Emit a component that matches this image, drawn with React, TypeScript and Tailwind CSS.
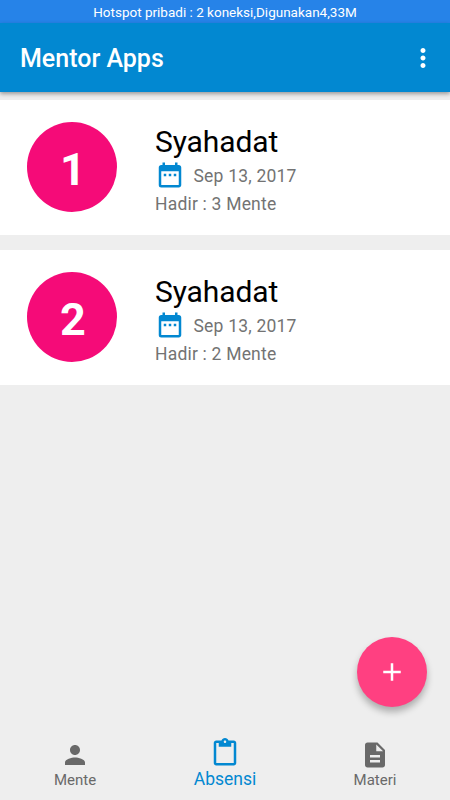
import {useState} from "react"
import type {IconType} from "react-icons"
import {MdAdd, MdContentPaste, MdDateRange, MdDescription, MdMoreVert, MdPerson} from "react-icons/md"

type TabKey = "mente" | "absensi" | "materi"

type Meeting = {
    id: number
    title: string
    date: string
    attendees: number
}

const MEETINGS: Meeting[] = [
    {id: 1, title: "Syahadat", date: "Sep 13, 2017", attendees: 3},
    {id: 2, title: "Syahadat", date: "Sep 13, 2017", attendees: 2},
]

const TABS: { key: TabKey; label: string; icon: IconType }[] = [
    {key: "mente", label: "Mente", icon: MdPerson},
    {key: "absensi", label: "Absensi", icon: MdContentPaste},
    {key: "materi", label: "Materi", icon: MdDescription},
]

function MeetingCard({meeting}: { meeting: Meeting }) {
    return (
        <li className="flex h-[135px] bg-white pt-[22px] pl-[27px]">
            <div
                className="flex size-[90px] shrink-0 items-center justify-center rounded-full bg-[#f50b78] pt-1.5 pl-0.5 text-[45px] font-bold text-white">
                {meeting.id}
            </div>
            <div className="ml-[38px] text-[17.5px] tracking-[0.2px] text-[#737373]">
                <h2 className="pt-px text-[30px] leading-[38px] tracking-[-0.1px] text-black">{meeting.title}</h2>
                <div className="flex h-7 items-center">
                    <MdDateRange className="size-[30px] text-[#0288d1]"/>
                    <span className="ml-[8.5px] pt-0.5 leading-5">{meeting.date}</span>
                </div>
                <p className="leading-[30px]">Hadir : {meeting.attendees} Mente</p>
            </div>
        </li>
    )
}

export default function App() {
    const [activeTab, setActiveTab] = useState<TabKey>("absensi")

    return (
        <div className="relative flex h-screen flex-col overflow-hidden bg-[#eeeeee] font-['Roboto',sans-serif]">
            <div className="h-[23px] shrink-0 bg-[#2683e8] text-center text-[13.5px] leading-[25px] text-white">
                Hotspot pribadi : 2 koneksi,Digunakan4,33M
            </div>

            <header
                className="flex h-[69px] shrink-0 items-center justify-between bg-[#0288d1] pr-[12.5px] pl-5 text-white shadow-[0_2px_4px_rgba(0,0,0,0.35)]">
                <h1 className="pt-[3px] text-[25px] leading-8 font-medium">Mentor Apps</h1>
                <button type="button" aria-label="Menu">
                    <MdMoreVert className="size-[30px]"/>
                </button>
            </header>

            <ul className="mt-2 flex-1 space-y-[15px]">
                {MEETINGS.map((meeting) => (
                    <MeetingCard key={meeting.id} meeting={meeting}/>
                ))}
            </ul>

            <button
                type="button"
                aria-label="Tambah"
                className="absolute right-[23px] bottom-[93px] flex size-[70px] items-center justify-center rounded-full bg-[#ff4081] text-white shadow-[0_5px_7px_rgba(0,0,0,0.28)]"
            >
                <MdAdd className="size-[30px]"/>
            </button>

            <nav className="flex h-[70px] shrink-0">
                {TABS.map(({key, label, icon: Icon}) => (
                    <button
                        key={key}
                        type="button"
                        className={`flex flex-1 flex-col items-center ${
                            activeTab === key
                                ? "pt-[7.5px] text-[17.5px] text-[#0288d1]"
                                : "pt-2.5 text-[15px] text-[#696969]"
                        }`}
                        onClick={() => setActiveTab(key)}
                    >
                        <Icon className="size-[30px]"/>
                        <span className={activeTab === key ? "leading-[23px]" : "leading-5"}>{label}</span>
                    </button>
                ))}
            </nav>
        </div>
    )
}
